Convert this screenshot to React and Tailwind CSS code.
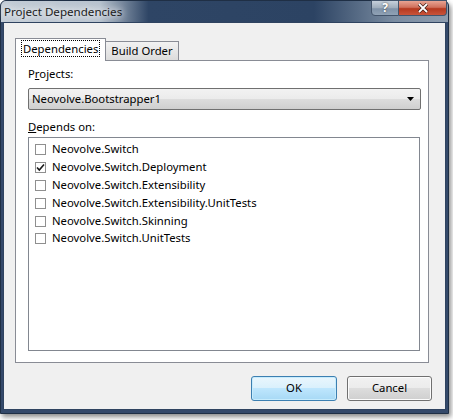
import { useState } from 'react';

const projects = [
  { name: 'Neovolve.Switch', checked: false },
  { name: 'Neovolve.Switch.Deployment', checked: true },
  { name: 'Neovolve.Switch.Extensibility', checked: false },
  { name: 'Neovolve.Switch.Extensibility.UnitTests', checked: false },
  { name: 'Neovolve.Switch.Skinning', checked: false },
  { name: 'Neovolve.Switch.UnitTests', checked: false },
];

function CheckRow({ item, onToggle }) {
  return (
    <div className="flex items-center h-[17.8px] pl-[6px] gap-[6px]" onClick={onToggle}>
      <div className="w-[11px] h-[11px] border border-[#8f8f8f] bg-white flex items-center justify-center">
        {item.checked && (
          <svg width="9" height="9" viewBox="0 0 9 9">
            <path d="M1 4.5 L3.3 7 L8 1.5" fill="none" stroke="#1a1a1a" strokeWidth="1.6" />
          </svg>
        )}
      </div>
      <span>{item.name}</span>
    </div>
  );
}

export default function App() {
  const [items, setItems] = useState(projects);
  const [tab, setTab] = useState('deps');

  function toggle(i) {
    setItems((prev) => prev.map((p, idx) => (idx === i ? { ...p, checked: !p.checked } : p)));
  }

  return (
    <div
      className="w-[453px] h-[420px] bg-white relative overflow-hidden text-[11.3px] text-black"
      style={{ fontFamily: '"Segoe UI", "Noto Sans", sans-serif' }}
    >
      {/* window */}
      <div className="w-[449px] h-[414px] flex flex-col rounded-t-[6px] border border-[#1f2f45] shadow-[2px_3px_5px_rgba(0,0,0,0.45)] bg-[#34496a]">
        {/* title bar */}
        <div className="h-[21px] flex items-start rounded-t-[5px] bg-[linear-gradient(90deg,#c3ccd6_0%,#b8c3cf_22%,#2e4565_33%,#2c4363_70%,#7a8ca1_88%,#8d9cae_100%)]">
          <div className="pl-[3px] pt-[2px] text-[11.6px] text-[#1c1c1c] [text-shadow:0_0_6px_#fff,0_0_10px_#fff]">
            Project Dependencies
          </div>
          <div className="ml-auto flex mr-[1px] -mt-[1px]">
            <div className="w-[28px] h-[16px] rounded-bl-[4px] border border-[#43546b] bg-[linear-gradient(180deg,#c6d0db_0%,#9eacbb_50%,#7f92a8_55%,#90a2b5_100%)] flex items-center justify-center text-white font-bold text-[12px] leading-none [text-shadow:0_0_2px_#333]">
              ?
            </div>
            <div className="w-[48px] h-[16px] rounded-br-[4px] border border-l-0 border-[#43546b] bg-[linear-gradient(180deg,#e8a493_0%,#d0705c_45%,#b5381f_55%,#c9543a_100%)] flex items-center justify-center">
              <svg width="12" height="10" viewBox="0 0 12 10">
                <path d="M2 1 L10 9 M10 1 L2 9" stroke="#3a1a14" strokeWidth="3.2" />
                <path d="M2 1 L10 9 M10 1 L2 9" stroke="#ffffff" strokeWidth="1.8" />
              </svg>
            </div>
          </div>
        </div>

        {/* client area */}
        <div className="flex-1 mx-[2px] mb-[3px] bg-[#f0f0f0] border border-[#2f4360] flex flex-col">
          <div className="pt-[14px] pl-[11px] pr-[16px]">
            {/* tabs */}
            <div className="flex items-end h-[23px]">
              <div
                onClick={() => setTab('deps')}
                className="relative z-10 h-[23px] px-[5px] pt-[2px] bg-white border border-b-0 border-[#898c95] -mb-px"
              >
                <span className="px-[1px] border border-dotted border-black">Dependencies</span>
              </div>
              <div
                onClick={() => setTab('order')}
                className="h-[19px] px-[5px] bg-linear-to-b from-[#f2f2f2] to-[#dcdcdc] border border-l-0 border-b-0 border-[#898c95] leading-[18px]"
              >
                Build Order
              </div>
            </div>

            {/* panel */}
            <div className="h-[303px] bg-white border border-[#898c95] px-[12px] pt-[5px]">
              {tab === 'deps' && (
                <>
                  <div className="h-[18px]">
                    P<span className="underline">r</span>ojects:
                  </div>
                  <div className="mt-[4px] h-[22px] w-[393px] rounded-[2px] border border-[#707070] bg-[linear-gradient(180deg,#f2f2f2_0%,#ebebeb_50%,#dddddd_50%,#cfcfcf_100%)] flex items-center pl-[3px] pr-[6px]">
                    <span>Neovolve.Bootstrapper1</span>
                    <svg className="ml-auto" width="7" height="4" viewBox="0 0 7 4">
                      <path d="M0 0 H7 L3.5 4 Z" fill="#000" />
                    </svg>
                  </div>
                  <div className="mt-[9px] h-[17px]">
                    <span className="underline">D</span>epends on:
                  </div>
                  <div className="mt-[1px] h-[214px] w-[392px] border border-[#828790] bg-white pt-[3px]">
                    {items.map((item, i) => (
                      <CheckRow key={item.name} item={item} onToggle={() => toggle(i)} />
                    ))}
                  </div>
                </>
              )}
            </div>
          </div>

          {/* buttons */}
          <div className="flex justify-end gap-[10px] pr-[13px] pt-[13px]">
            <button className="w-[86px] h-[25px] rounded-[3px] border border-[#3c7fb1] bg-[linear-gradient(180deg,#eaf6fd_0%,#d9f0fc_50%,#bee6fd_50%,#a7d9f5_100%)] shadow-[inset_0_0_0_1px_#c7ecfd]">
              OK
            </button>
            <button className="w-[85px] h-[25px] rounded-[3px] border border-[#707070] bg-[linear-gradient(180deg,#f2f2f2_0%,#ebebeb_50%,#dddddd_50%,#cfcfcf_100%)] shadow-[inset_0_0_0_1px_#fcfcfc]">
              Cancel
            </button>
          </div>
        </div>
      </div>
    </div>
  );
}
